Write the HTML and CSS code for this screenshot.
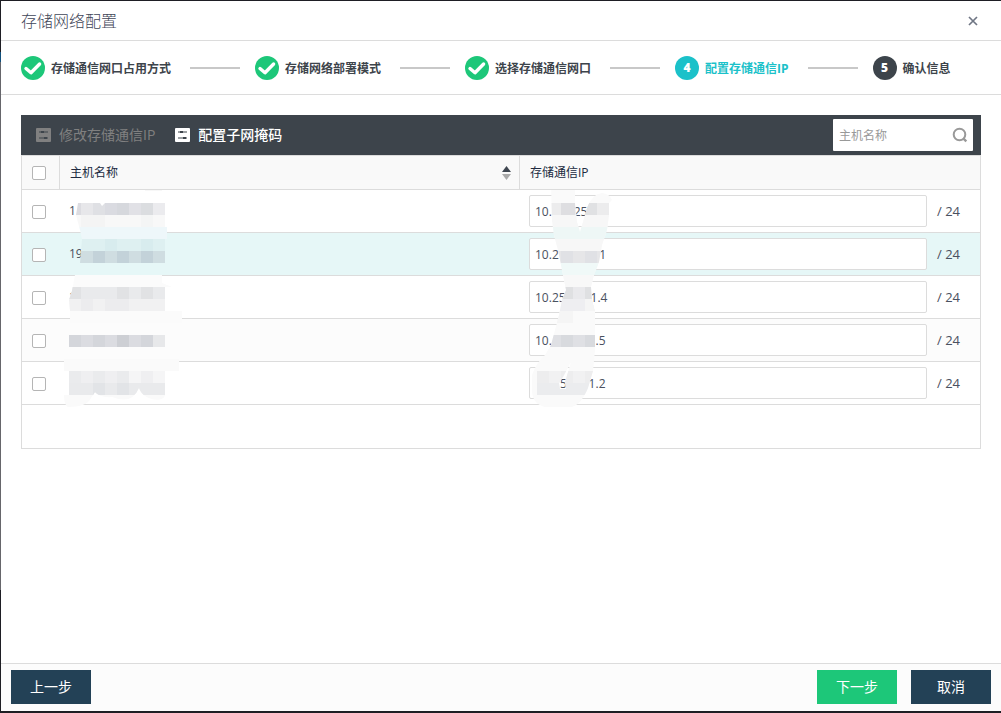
FILE: index.html
```html
<!DOCTYPE html>
<html lang="zh-CN">
<head>
<meta charset="utf-8">
<title>存储网络配置</title>
<link rel="stylesheet" href="styles.css">
</head>
<body>
<main class="dialog">
  <header class="dialog-head">
    <h1 class="title">存储网络配置</h1>
    <button class="close" type="button" aria-label="关闭">
      <svg width="10" height="10" viewBox="0 0 10 10"><path d="M1 1l8 8M9 1l-8 8" stroke="#6f7684" stroke-width="1.7" fill="none"/></svg>
    </button>
  </header>

  <ol class="steps">
    <li class="step"><span class="dot done"><svg width="24" height="24" viewBox="0 0 24 24"><path d="M5 12.5l5 4.3 8.600-8.800" fill="none" stroke="#fff" stroke-width="3.400" stroke-linecap="round" stroke-linejoin="round"/></svg></span><span class="label">存储通信网口占用方式</span></li>
    <li class="step"><span class="dot done"><svg width="24" height="24" viewBox="0 0 24 24"><path d="M5 12.5l5 4.3 8.600-8.800" fill="none" stroke="#fff" stroke-width="3.400" stroke-linecap="round" stroke-linejoin="round"/></svg></span><span class="label">存储网络部署模式</span></li>
    <li class="step"><span class="dot done"><svg width="24" height="24" viewBox="0 0 24 24"><path d="M5 12.5l5 4.3 8.600-8.800" fill="none" stroke="#fff" stroke-width="3.400" stroke-linecap="round" stroke-linejoin="round"/></svg></span><span class="label">选择存储通信网口</span></li>
    <li class="step current" aria-current="step"><span class="dot">4</span><span class="label">配置存储通信IP</span></li>
    <li class="step"><span class="dot">5</span><span class="label">确认信息</span></li>
  </ol>

  <section class="content">
    <div class="toolbar">
      <button class="tool" type="button" disabled>
        <svg width="15" height="14" viewBox="0 0 15 14"><rect width="15" height="14" rx="1" fill="#808080"/><path d="M3 4h9M3 10h9" stroke="#3d444b" stroke-width="1"/><rect x="5" y="3" width="3" height="2" fill="#3d444b"/><rect x="8" y="9" width="3" height="2" fill="#3d444b"/></svg>
        修改存储通信IP
      </button>
      <button class="tool active" type="button">
        <svg width="15" height="14" viewBox="0 0 15 14"><rect width="15" height="14" rx="1" fill="#fff"/><path d="M3 4h9M3 10h9" stroke="#3d444b" stroke-width="1"/><rect x="5" y="3" width="3" height="2" fill="#3d444b"/><rect x="8" y="9" width="3" height="2" fill="#3d444b"/></svg>
        配置子网掩码
      </button>
      <div class="search">
        <input class="search-input" type="text" placeholder="主机名称" aria-label="主机名称">
        <button class="search-go" type="button" aria-label="搜索">
          <svg width="16" height="16" viewBox="0 0 16 16"><circle cx="7.500" cy="7.500" r="5.800" fill="none" stroke="#999" stroke-width="2"/><path d="M11.300 11.300l3 3" stroke="#999" stroke-width="2.400"/></svg>
        </button>
      </div>
    </div>

    <table class="hosts">
      <colgroup><col class="col-check"><col class="col-host"><col></colgroup>
      <thead>
        <tr>
          <th class="check"><input class="box" type="checkbox" aria-label="全选"></th>
          <th class="split"><div class="sortable">主机名称
            <svg width="9" height="14" viewBox="0 0 9 14"><path d="M4.500 0L9 6H0z" fill="#3f4650"/><path d="M4.500 14L9 8H0z" fill="#aaa"/></svg></div></th>
          <th class="split">存储通信IP</th>
        </tr>
      </thead>
      <tbody>
        <tr>
          <td class="check"><input class="box" type="checkbox" aria-label="选择主机 1"></td>
          <td class="cell">1
            <svg class="mask" width="130" height="220" viewBox="59 190 130 220" shape-rendering="crispEdges" aria-hidden="true">
              <defs>
                <clipPath id="hostMask1"><path d="M78 203H100L102 206L105 203H165V227H167V239H165V263H80L82 239L80 230L76 215Z"/></clipPath>
                <clipPath id="hostMask2"><path d="M75 275H162V283L172 287H165V311H182V323H70V311L69 300L72 291Z"/></clipPath>
                <clipPath id="hostMask3"><path d="M64 359H179V371H165V395C164 403 143 401 139 388Q132 405 112 397Q100 398 95 392L91 398Q87 407 68 407Q64 405 64 395H69V371H64Z"/></clipPath>
              </defs>
              <path d="M145 190h17v1h-17z" fill="#f7f7f7"/>
              <g clip-path="url(#hostMask1)">
                <path d="M76 203h5v12h-5z" fill="#dcdce1"/><path d="M81 203h12v12H81z" fill="#e7e7ea"/><path d="M93 203h12v12H93z" fill="#dfe0e4"/><path d="M105 203h12v12h-12z" fill="#dadbe1"/><path d="M117 203h12v12h-12z" fill="#d6d8dd"/><path d="M129 203h12v12h-12z" fill="#e1e1e6"/><path d="M141 203h12v12h-12z" fill="#dbdde0"/><path d="M153 203h12v12h-12z" fill="#ebebee"/>
                <path d="M76 215h89v12H76z" fill="#f8f8f8"/><path d="M81 215h24v12H81z" fill="#f4f4f4"/><path d="M141 215h12v12h-12z" fill="#f4f5f5"/>
                <path d="M76 227h92v12H76z" fill="#eef7fa"/><path d="M76 239h92v12H76z" fill="#def0f1"/><path d="M105 239h12v12h-12zM141 239h12v12h-12z" fill="#d8ecee"/>
                <path d="M76 251h92v12H76z" fill="#cfdde1"/><path d="M93 251h12v12H93zM117 251h12v12h-12zM141 251h12v12h-12z" fill="#c3d2d9"/>
              </g>
              <g clip-path="url(#hostMask2)">
                <path d="M69 275h113v48H69z" fill="#fbfbfb"/>
                <path d="M69 287h96v12H69z" fill="#e9eaec"/><path d="M69 287h12v12H69zM117 287h12v12h-12zM141 287h12v12h-12z" fill="#e1e2e4"/>
                <path d="M69 299h96v12H69z" fill="#f1f1f2"/><path d="M81 299h12v12H81zM105 299h24v12h-24z" fill="#ececee"/>
              </g>
              <path d="M69 335h96v12H69z" fill="#dbdce1"/><path d="M69 335h12v12H69zM93 335h12v12H93zM141 335h12v12h-12z" fill="#d4d6db"/><path d="M117 335h12v12h-12z" fill="#cdcfd4"/><path d="M153 335h12v12h-12z" fill="#e7e8ea"/>
              <g clip-path="url(#hostMask3)">
                <path d="M64 359h115v48H64z" fill="#fafafa"/>
                <path d="M69 371h96v12H69z" fill="#efeff1"/><path d="M69 371h12v12H69zM93 371h12v12H93zM117 371h12v12h-12z" fill="#eaebed"/><path d="M129 371h12v12h-12zM153 371h12v12h-12z" fill="#f5f5f6"/>
                <path d="M69 383h96v12H69z" fill="#e9eaec"/><path d="M93 383h12v12H93zM117 383h12v12h-12z" fill="#e2e4e7"/>
              </g>
            </svg>
          </td>
          <td class="cell"><div class="field"><input class="ip" type="text" aria-label="存储通信IP 1" value="10.&nbsp;&nbsp;&nbsp;&nbsp;&nbsp;&nbsp;&nbsp;25"><span class="prefix">/ 24</span></div>
            <svg class="mask" width="110" height="225" viewBox="519 190 110 225" aria-hidden="true">
              <defs><clipPath id="ipMask"><path clip-rule="evenodd" d="M551 184H575V203L577 222L580 232L583 222L587 208Q592 194 602 193Q610 194 612 200L609 203V215L607 230L602 245L599 262L594 275L591 287L592 300L595 312V350L593 371L588 388Q580 407 570 407H545Q532 404 532 390V375Q536 363 545 355L551 345L555 330L559 315L562 300L566 290L564 280L561 265L558 250L554 235L552 220ZM571 362L563 377L559 383L560 389H566L565 382Z"/></clipPath></defs>
              <g clip-path="url(#ipMask)" shape-rendering="crispEdges">
                <path d="M530 184h85v224h-85z" fill="#fafafa"/>
                <path d="M550 203h65v12h-65z" fill="#ececed"/><path d="M561 203h14v12h-14z" fill="#dedee1"/><path d="M585 203h12v12h-12z" fill="#e0e1e3"/>
                <path d="M550 215h65v12h-65z" fill="#f7f7f7"/><path d="M550 227h65v12h-65z" fill="#eef7f6"/>
                <path d="M550 239h65v12h-65z" fill="#f7f7f7"/><path d="M550 251h65v12h-65z" fill="#e6e6e8"/><path d="M561 251h12v12h-12zM585 251h12v12h-12z" fill="#e0e1e5"/>
                <path d="M550 263h65v12h-65z" fill="#f0f9f8"/><path d="M550 275h65v12h-65z" fill="#f8f8f8"/>
                <path d="M550 287h65v12h-65z" fill="#dfe0e2"/><path d="M573 287h12v12h-12z" fill="#e9e9ec"/><path d="M550 299h65v12h-65z" fill="#eeeef1"/><path d="M550 311h23v12h-23zM585 299h12v12h-12z" fill="#f5f5f5"/>
                <path d="M550 335h65v12h-65z" fill="#dfe0e4"/><path d="M561 335h12v12h-12zM585 335h12v12h-12z" fill="#d8dade"/>
                <path d="M537 371h60v12h-60z" fill="#ededee"/><path d="M549 371h12v12h-12zM573 371h12v12h-12z" fill="#f1f1f2"/><path d="M537 383h60v12h-60z" fill="#ebecee"/>
              </g>
            </svg>
          </td>
        </tr>
        <tr class="hover">
          <td class="check"><input class="box" type="checkbox" aria-label="选择主机 2"></td>
          <td class="cell">19</td>
          <td class="cell"><div class="field"><input class="ip" type="text" aria-label="存储通信IP 2" value="10.2&nbsp;&nbsp;&nbsp;&nbsp;&nbsp;&nbsp;&nbsp;&nbsp;&nbsp;&nbsp;&nbsp;&nbsp;&nbsp;1"><span class="prefix">/ 24</span></div></td>
        </tr>
        <tr>
          <td class="check"><input class="box" type="checkbox" aria-label="选择主机 3"></td>
          <td class="cell">1</td>
          <td class="cell"><div class="field"><input class="ip" type="text" aria-label="存储通信IP 3" value="10.25&nbsp;&nbsp;&nbsp;&nbsp;&nbsp;&nbsp;&nbsp;&nbsp;1.4"><span class="prefix">/ 24</span></div></td>
        </tr>
        <tr class="alt">
          <td class="check"><input class="box" type="checkbox" aria-label="选择主机 4"></td>
          <td class="cell"></td>
          <td class="cell"><div class="field"><input class="ip" type="text" aria-label="存储通信IP 4" value="10.&nbsp;&nbsp;&nbsp;&nbsp;&nbsp;&nbsp;&nbsp;&nbsp;&nbsp;&nbsp;&nbsp;&nbsp;&nbsp;&nbsp;.5"><span class="prefix">/ 24</span></div></td>
        </tr>
        <tr>
          <td class="check"><input class="box" type="checkbox" aria-label="选择主机 5"></td>
          <td class="cell"></td>
          <td class="cell"><div class="field"><input class="ip" type="text" aria-label="存储通信IP 5" value="&nbsp;&nbsp;&nbsp;&nbsp;&nbsp;&nbsp;&nbsp;&nbsp;5&nbsp;&nbsp;&nbsp;&nbsp;&nbsp;&nbsp;&nbsp;1.2"><span class="prefix">/ 24</span></div></td>
        </tr>
      </tbody>
    </table>
    <div class="table-foot"></div>
  </section>

  <footer class="dialog-foot">
    <button class="btn" type="button">上一步</button>
    <div class="foot-right">
      <button class="btn primary" type="button">下一步</button>
      <button class="btn" type="button">取消</button>
    </div>
  </footer>
</main>
</body>
</html>
```

FILE: styles.css
```css
* { box-sizing: border-box; }

body {
  margin: 0;
  padding: 1px 0 2px 1px;
  min-height: 100vh;
  display: flex;
  background: linear-gradient(#1e1e24 52px, #12507c 52px 62px, #66666b 62px 590px, #1e1e24 590px);
  color: #4a5160;
  font: 12px/18px "Open Sans", "Noto Sans CJK SC", sans-serif;
}

button, input { font: inherit; color: inherit; }

button {
  padding: 0;
  border: 0;
  background: none;
}

svg { display: block; flex: none; }

.dialog {
  flex: 1;
  display: flex;
  flex-direction: column;
  background: #fff;
}

.dialog-head {
  display: flex;
  align-items: center;
  justify-content: space-between;
  height: 40px;
  padding: 0 23px 0 20px;
  border-bottom: 1px solid #dcdcdc;
}

.title {
  margin: 0;
  color: #3f4658;
  font-size: 16px;
  font-weight: 300;
  line-height: 24px;
}

.close { display: flex; }

.steps {
  display: flex;
  align-items: center;
  height: 54px;
  margin: 0;
  padding: 0 20px;
  border-bottom: 1px solid #dcdcdc;
  list-style: none;
  color: #3d444b;
  font-weight: 700;
  white-space: nowrap;
}

.step {
  display: flex;
  align-items: center;
  gap: 6px;
}

.step + .step::before {
  content: "";
  width: 50px;
  height: 2px;
  margin: 0 9px 0 19px;
  background: #c8c8c8;
}

.label { padding-top: 2px; }

.dot {
  display: flex;
  align-items: center;
  justify-content: center;
  width: 24px;
  height: 24px;
  border-radius: 50%;
  background: #3d444b;
  color: #fff;
  font-weight: 800;
}

.dot.done { background: #1dc779; }
.current { color: #1bc1c9; }
.current .dot { background: #1bc1c9; }

.content {
  flex: 1;
  padding: 20px;
}

.toolbar {
  display: flex;
  align-items: center;
  gap: 20px;
  height: 40px;
  padding: 0 8px 0 15px;
  background: #3d444b;
  font-size: 14px;
}

.tool {
  display: flex;
  align-items: center;
  gap: 8px;
  color: #808080;
}

.tool.active { color: #fff; font-weight: 500; }

.search {
  display: flex;
  align-items: center;
  width: 140px;
  height: 32px;
  margin-left: auto;
  padding: 0 5px 0 6px;
  border-radius: 1px;
  background: #fff;
  font-size: 12px;
}

.search-input {
  flex: 1;
  min-width: 0;
  padding: 2px 0 0;
  border: 0;
  outline: 0;
  background: none;
}

.search-input::placeholder { color: #999; }

.hosts {
  width: 100%;
  table-layout: fixed;
  border: 1px solid #dcdcdc;
  border-bottom: 0;
  border-spacing: 0;
}

.col-check { width: 37px; }
.col-host { width: 460px; }

.hosts th {
  height: 34px;
  padding: 0 8px 0 10px;
  border-bottom: 1px solid #dcdcdc;
  background: #f9f9f9;
  color: #202a40;
  font-weight: 400;
  text-align: left;
}

.hosts .split { border-left: 1px solid #dcdcdc; }

.sortable {
  display: flex;
  align-items: center;
  justify-content: space-between;
}

.hosts td {
  height: 43px;
  border-bottom: 1px solid #dcdcdc;
}

.hosts .cell {
  position: relative;
  padding: 0 10px;
}

.hosts th.check { padding: 0 0 0 10px; }
.hosts td.check { padding: 2px 0 0 10px; }

.hover { background: #e6f7f7; }
.alt { background: #fcfcfc; }

.box {
  display: block;
  appearance: none;
  width: 14px;
  height: 14px;
  margin: 0;
  border: 1px solid #b5b5b5;
  border-radius: 2px;
  background: #fff;
}

.field {
  display: flex;
  align-items: center;
  gap: 10px;
}

.ip {
  flex: 1;
  min-width: 0;
  height: 32px;
  padding: 0 5px;
  border: 1px solid #dcdcdc;
  border-radius: 2px;
  background: #fff;
}

.prefix {
  width: 33px;
  font-size: 13px;
}

/* Redaction patches start at the top left of the first row and span all rows */
.mask {
  position: absolute;
  top: 0;
  left: 0;
  z-index: 1;
  pointer-events: none;
}

.table-foot {
  height: 44px;
  border: 1px solid #dcdcdc;
  border-top: 0;
}

.dialog-foot {
  display: flex;
  justify-content: space-between;
  padding: 6px 10px 7px;
  border-top: 1px solid #dcdcdc;
  background: #fcfcfc;
}

.foot-right {
  display: flex;
  gap: 14px;
}

.btn {
  width: 80px;
  height: 34px;
  background: #234156;
  color: #fff;
  font-size: 14px;
}

.btn.primary { background: #1dc779; }
```
